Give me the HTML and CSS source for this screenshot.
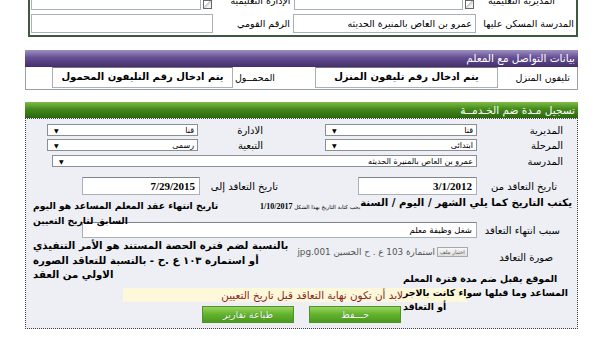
FILE: index.html
```html
<!DOCTYPE html>
<html lang="ar" dir="rtl">

<head>
  <meta charset="UTF-8">
  <meta name="viewport" content="width=device-width, initial-scale=1.0">
  <title>تسجيل مدة ضم الخدمة</title>
  <link rel="stylesheet" href="styles.css">
</head>

<body>
  <div class="page">

    <!-- بيانات المدرسة -->
    <div class="top-box">
      <div class="top-row">
        <div class="t-lab t-lab1 cut">المديرية التعليمية</div>
        <span class="ico"></span>
        <div class="t-inp short"></div>
        <div class="t-lab t-lab2 cut">الإدارة التعليمية</div>
        <span class="ico"></span>
        <div class="t-inp short"></div>
      </div>
      <div class="top-row">
        <div class="t-lab t-lab1">المدرسة المسكن عليها</div>
        <div class="t-inp t-inp1">عمرو بن العاص بالمنيرة الحديثه</div>
        <div class="t-lab t-lab2">الرقم القومي</div>
        <div class="t-inp t-inp2"></div>
      </div>
    </div>

    <!-- التواصل -->
    <div class="section">
      <div class="head head-purple">بيانات التواصل مع المعلم</div>
      <div class="contact-row">
        <div class="c-lab">تليفون المنزل</div>
        <div class="c-inp c-inp1">يتم ادخال رقم تليفون المنزل</div>
        <div class="c-lab c-lab2">المحمــول</div>
        <div class="c-inp c-inp2">يتم ادخال رقم التليفون المحمول</div>
      </div>
    </div>

    <!-- ضم مدة الخدمة -->
    <div class="section section-green">
      <div class="head head-green">تسجيل مـدة ضم الخـدمــة</div>
      <div class="svc-body">

        <div class="row r1">
          <div class="lab-r">المديرية</div>
          <div class="sel w152"><span>قنا</span><span class="arr">▼</span></div>
          <div class="lab-l">الادارة</div>
          <div class="sel w151"><span>قنا</span><span class="arr">▼</span></div>
        </div>

        <div class="row r2">
          <div class="lab-r">المرحلة</div>
          <div class="sel w152"><span>ابتدائى</span><span class="arr">▼</span></div>
          <div class="lab-l">التبعية</div>
          <div class="sel w151"><span>رسمى</span><span class="arr">▼</span></div>
        </div>

        <div class="row r3">
          <div class="lab-r">المدرسة</div>
          <div class="sel wide"><span>عمرو بن العاص بالمنيرة الحديثه</span><span class="arr">▼</span></div>
        </div>

        <div class="row r4">
          <div class="lab-r lab-date">تاريخ التعاقد من</div>
          <div class="inp date-from">3/1/2012</div>
          <div class="lab-l lab-to">تاريخ التعاقد إلى</div>
          <div class="inp date-to">7/29/2015</div>
        </div>

        <div class="row r5">
          <div class="big-note">يكتب التاريخ كما يلي الشهر / اليوم / السنة</div>
          <div class="hint">يجب كتابة التاريخ بهذا الشكل <b>1/10/2017</b></div>
          <div class="para para1">تاريخ انتهاء عقد المعلم المساعد هو اليوم<br>السابق لتاريخ التعيين</div>
        </div>

        <div class="row r6">
          <div class="lab-r lab-reason">سبب انتهاء التعاقد</div>
          <div class="inp reason">شغل وظيفة معلم</div>
        </div>

        <div class="row r7">
          <div class="lab-r lab-img">صورة التعاقد</div>
          <div class="file">
            <span class="file-btn">اختيار ملف</span>
            <span class="file-name">استمارة 103 ع . ح الحسين 001.jpg</span>
          </div>
          <div class="para para2">بالنسبة لضم فترة الحصة المستند هو الأمر التنفيذي<br>أو استمارة ١٠٣ ع .ح - بالنسبة للتعاقد الصورة<br>الاولي من العقد</div>
        </div>

        <div class="para para3">الموقع يقبل ضم مدة فترة المعلم<br>المساعد وما قبلها سواء كانت بالاجر<br>أو التعاقد</div>
        <div class="warn">لابد أن تكون نهاية التعاقد قبل تاريخ التعيين</div>

        <div class="buttons">
          <button class="btn" type="button">حـــفظ</button>
          <button class="btn" type="button">طباعة تقارير</button>
        </div>

      </div>
    </div>

  </div>
</body>

</html>
```

FILE: styles.css
```css
body {
  margin: 0;
  background: #fff;
  font-family: "DejaVu Sans", sans-serif;
  direction: rtl;
  color: #000;
}

.page {
  width: 600px;
  height: 338px;
  overflow: hidden;
}

/* TOP BOX */
.top-box {
  margin: -12px 22px 0 28px;
  border: 2px solid #3e5a3e;
  padding: 1px 1px 2px;
  background: #fff;
}

.top-row {
  display: flex;
  align-items: center;
  height: 19px;
}

.top-row + .top-row {
  margin-top: 4px;
}

.t-lab {
  font-size: 9.5px;
  white-space: nowrap;
  box-sizing: border-box;
}

.t-lab1 {
  width: 99px;
  padding-right: 1px;
}

.t-lab2 {
  width: 80px;
  padding-right: 3px;
}

.t-lab1.cut {
  padding-right: 20px;
}

.t-inp {
  height: 19px;
  box-sizing: border-box;
  border: 1px solid #a9b0b8;
  background: #fff;
  font-size: 9.5px;
  line-height: 17px;
  padding: 0 3px;
  white-space: nowrap;
}

.t-inp1 {
  width: 183px;
}

.t-inp2 {
  width: 182px;
}

.t-inp.short {
  width: 170px;
}

.ico {
  width: 7px;
  height: 7px;
  border: 1px solid #666;
  background: linear-gradient(135deg, #fff 40%, #c8c8c8 41%, #f2f2f2 70%);
  margin: 0 2px 1px;
  align-self: flex-end;
}

/* SECTIONS */
.section {
  margin: 13px 22px 0 25px;
}

.section-green {
  margin-top: 12px;
}

.head {
  color: #fff;
  font-size: 10.5px;
  padding-right: 3px;
  white-space: nowrap;
}

.head-purple {
  height: 17px;
  line-height: 17px;
  background: linear-gradient(#9d90c2, #654f92 45%, #452d6d);
}

.head-green {
  height: 16px;
  line-height: 16px;
  background: linear-gradient(#7fbd45, #43891c 45%, #2a660c);
}

.contact-row {
  display: flex;
  height: 23px;
  box-sizing: border-box;
  border: 1px solid #9aa0a6;
  border-top: none;
  background: #fff;
}

.c-lab {
  width: 79px;
  box-sizing: border-box;
  padding-right: 7px;
  font-size: 9.5px;
  line-height: 21px;
  white-space: nowrap;
}

.c-lab2 {
  width: 82px;
  padding-right: 40px;
}

.c-inp {
  height: 21px;
  box-sizing: border-box;
  border: 1px solid #a9b0b8;
  border-top-color: #777;
  font-size: 10px;
  font-weight: bold;
  line-height: 17px;
  text-align: center;
  white-space: nowrap;
}

.c-inp1 {
  width: 183px;
}

.c-inp2 {
  width: 181px;
}

/* SERVICE BODY */
.svc-body {
  border: 1px dotted #444;
  background: #edeff4;
  padding: 4px 0 4px;
  height: 201px;
}

.row {
  display: flex;
  align-items: center;
}

.r1,
.r2,
.r3 {
  height: 14px;
}

.r2 {
  margin-top: 1px;
}

.r3 {
  margin-top: 2px;
}

.r4 {
  height: 20px;
  margin-top: 8px;
}

.r5 {
  height: 25px;
  align-items: flex-start;
}

.r6 {
  height: 18px;
}

.r7 {
  height: 33px;
  align-items: flex-start;
}

.lab-r {
  width: 100px;
  box-sizing: border-box;
  padding-right: 14px;
  font-size: 10px;
  white-space: nowrap;
}

.lab-l {
  width: 127px;
  box-sizing: border-box;
  padding-right: 62px;
  font-size: 10px;
  white-space: nowrap;
}

.sel {
  height: 12px;
  box-sizing: border-box;
  border: 1px solid #8a8f96;
  background: #fff;
  display: flex;
  justify-content: space-between;
  align-items: center;
  padding: 0 3px 0 6px;
  font-size: 8px;
  white-space: nowrap;
}

.arr {
  font-size: 6px;
}

.w152 {
  width: 152px;
}

.w151 {
  width: 151px;
}

.wide {
  width: 425px;
}

.inp {
  box-sizing: border-box;
  border: 1px solid #a9b0b8;
  border-top-color: #7d848c;
  background: #fff;
  padding: 0 4px;
  white-space: nowrap;
}

.lab-date {
  padding-right: 20px;
}

.date-from,
.date-to {
  height: 18px;
  line-height: 17px;
  font-family: "Liberation Serif", serif;
  font-weight: bold;
  font-size: 11px;
}

.date-from {
  width: 119px;
}

.lab-to {
  width: 158px;
  padding-right: 80px;
}

.date-to {
  width: 118px;
}

.big-note {
  font-size: 10.2px;
  font-weight: bold;
  white-space: nowrap;
  padding-top: 1px;
  margin-right: 5px;
}

.hint {
  font-size: 5.5px;
  white-space: nowrap;
  padding-top: 6px;
}

.hint b {
  font-family: "Liberation Serif", serif;
  font-size: 8px;
}

.para {
  font-size: 10px;
  font-weight: bold;
  line-height: 14.5px;
  text-align: left;
  white-space: nowrap;
  position: relative;
  z-index: 1;
}

.para1 {
  margin-right: auto;
  margin-left: 7px;
  padding-top: 3px;
  font-size: 9.2px;
}

.lab-reason {
  padding-right: 17px;
}

.reason {
  width: 395px;
  height: 16px;
  font-size: 8.5px;
  line-height: 14px;
}

.lab-img {
  padding-right: 24px;
  margin-top: 13px;
}

.file {
  margin-top: 8px;
  margin-right: 9px;
  display: flex;
  align-items: center;
  gap: 2px;
  white-space: nowrap;
}

.file-btn {
  width: 31px;
  height: 10px;
  box-sizing: border-box;
  border: 1px solid #a8a8a8;
  background: linear-gradient(#f7f7f7, #dedede);
  font-size: 5.5px;
  line-height: 8px;
  color: #555;
  text-align: center;
}

.file-name {
  font-size: 8.8px;
  color: #555;
}

.para2 {
  margin-right: auto;
  margin-left: 7px;
  font-size: 10.2px;
}

.para3 {
  float: right;
  width: 170px;
  height: 33px;
  margin-right: 4px;
  line-height: 14px;
  font-size: 9.4px;
}

.warn {
  margin: 16px 110px 0 97px;
  height: 14px;
  line-height: 14px;
  background: #fcf8d9;
  color: #8b1c1c;
  font-size: 10.4px;
  white-space: nowrap;
  padding-right: 8px;
}

.buttons {
  display: flex;
  justify-content: center;
  gap: 15px;
  margin-top: 4px;
}

.btn {
  width: 92px;
  height: 17px;
  border: 1px solid #4f9327;
  background: linear-gradient(#96d65a, #62b22e 50%, #4c9a1e);
  color: #fff;
  font-family: "DejaVu Sans", sans-serif;
  font-size: 9.5px;
  padding: 0;
  text-shadow: 0 0 1px #2f6a10;
}
```
